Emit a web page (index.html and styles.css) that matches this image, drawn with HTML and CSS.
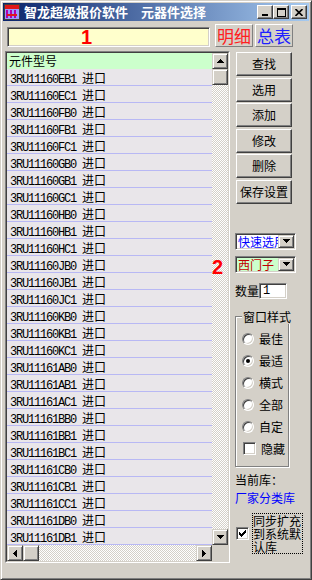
FILE: index.html
```html
<!DOCTYPE html>
<html lang="zh-CN">
<head>
    <meta charset="UTF-8">
    <title>元器件选择</title>
    <link rel="stylesheet" href="styles.css">
</head>
<body>
    <div class="window">
        <div class="titlebar">
            <svg class="app-icon" width="16" height="16" viewBox="0 0 16 16">
                <rect width="16" height="16" fill="#fff"/>
                <rect x="1" y="1" width="14" height="4" fill="#e01818"/>
                <rect x="1" y="5" width="14" height="10" fill="#9a9aff"/>
                <path d="M2 14V6h2v8zM6 14V6h2v8zM10 14V6h2v8z" fill="#b000b0"/>
                <path d="M3 10h10v2H3z" fill="#e01818"/>
                <rect x="0.5" y="0.5" width="15" height="15" fill="none" stroke="#404040"/>
            </svg>
            <span class="title">智龙超级报价软件　元器件选择</span>
            <div class="caption-btns">
                <span class="cap-btn"><svg width="8" height="8"><rect x="1" y="6" width="6" height="2"/></svg></span>
                <span class="cap-btn"><svg width="9" height="9"><path d="M0 0h9v9H0zM1 2v6h7V2z" fill-rule="evenodd"/></svg></span>
                <span class="cap-btn close"><svg width="8" height="7"><path d="M0.5 0l7 7M7.5 0l-7 7" stroke="#000" stroke-width="1.6"/></svg></span>
            </div>
        </div>

        <div class="client">
            <div class="top-row">
                <div class="search-box"><span class="mark">1</span></div>
                <span class="big-btn detail">明细</span>
                <span class="big-btn total">总表</span>
            </div>

            <div class="main">
                <div class="list">
                    <div class="list-frame">
                        <div class="list-top">
                            <div class="rows" id="partRows">
                                <div class="list-head">元件型号</div>
                                <!-- rows are added by the script below -->
                            </div>
                            <div class="vscroll">
                                <span class="sb-btn"><svg width="7" height="4"><path d="M3 0h1v1h1v1h1v1h1v1H0V3h1V2h1V1h1z"/></svg></span>
                                <span class="sb-btn"></span>
                                <span class="sb-track"></span>
                                <span class="sb-btn"><svg width="7" height="4"><path d="M0 0h7v1H6v1H5v1H4v1H3V3H2V2H1V1H0z"/></svg></span>
                            </div>
                        </div>
                        <div class="hscroll">
                            <span class="sb-btn"><svg width="4" height="7"><path d="M3 0h1v7H3V6H2V5H1V4H0V3h1V2h1V1h1z"/></svg></span>
                            <span class="sb-btn"></span>
                            <span class="sb-track"></span>
                            <span class="sb-btn"><svg width="4" height="7"><path d="M0 0h1v1h1v1h1v1h1v1H3v1H2v1H1v1H0z"/></svg></span>
                            <span class="sb-corner"></span>
                        </div>
                    </div>
                </div>

                <div class="side">
                    <div class="btn-stack">
                        <span class="btn">查找</span>
                        <span class="btn">选用</span>
                        <span class="btn">添加</span>
                        <span class="btn">修改</span>
                        <span class="btn">删除</span>
                        <span class="btn">保存设置</span>
                    </div>

                    <div class="combo quick">
                        <span class="combo-text">快速选用</span>
                        <span class="combo-drop"><svg width="7" height="4"><path d="M0 0h7v1H6v1H5v1H4v1H3V3H2V2H1V1H0z"/></svg></span>
                    </div>
                    <div class="combo maker">
                        <span class="combo-text">西门子</span>
                        <span class="combo-drop"><svg width="7" height="4"><path d="M0 0h7v1H6v1H5v1H4v1H3V3H2V2H1V1H0z"/></svg></span>
                    </div>
                    <span class="mark mark-2">2</span>

                    <div class="qty-row">
                        <span>数量</span>
                        <span class="qty-input">1</span>
                    </div>

                    <fieldset class="style-group">
                        <legend>窗口样式</legend>
                        <div class="option"><span class="radio"></span>最佳</div>
                        <div class="option"><span class="radio on"></span>最适</div>
                        <div class="option"><span class="radio"></span>横式</div>
                        <div class="option"><span class="radio"></span>全部</div>
                        <div class="option"><span class="radio"></span>自定</div>
                        <div class="option"><span class="check"></span>隐藏</div>
                    </fieldset>

                    <div class="lib-label">当前库：</div>
                    <div class="lib-name">厂家分类库</div>

                    <div class="sync-row">
                        <span class="check">
                            <svg width="7" height="7"><path d="M6 0h1v3H6v1H5v1H4v1H3v1H2V6H1V5H0V2h1v1h1v1h1V3h1V2h1V1h1z"/></svg>
                        </span>
                        <span class="sync-label">同步扩充到系统默认库</span>
                    </div>
                </div>
            </div>
        </div>
    </div>

    <script>
        const partCodes = [
            '3RU11160EB1', '3RU11160EC1', '3RU11160FB0', '3RU11160FB1',
            '3RU11160FC1', '3RU11160GB0', '3RU11160GB1', '3RU11160GC1',
            '3RU11160HB0', '3RU11160HB1', '3RU11160HC1', '3RU11160JB0',
            '3RU11160JB1', '3RU11160JC1', '3RU11160KB0', '3RU11160KB1',
            '3RU11160KC1', '3RU11161AB0', '3RU11161AB1', '3RU11161AC1',
            '3RU11161BB0', '3RU11161BB1', '3RU11161BC1', '3RU11161CB0',
            '3RU11161CB1', '3RU11161CC1', '3RU11161DB0', '3RU11161DB1'
        ];
        const partRows = document.getElementById('partRows');

        partCodes.forEach(code => {
            const row = document.createElement('div');
            row.className = 'row';
            row.innerHTML = `<span class="code">${code}</span><span class="origin">进口</span>`;
            partRows.appendChild(row);
        });
    </script>
</body>
</html>
```

FILE: styles.css
```css
* {
    box-sizing: border-box;
}
body {
    margin: 0;
    font-family: "Noto Sans CJK SC", sans-serif;
    font-size: 12px;
    color: #000;
}
.window {
    width: 312px;
    height: 580px;
    padding: 2px;
    background: #d4d0c8;
    border: 1px solid;
    border-color: #d4d0c8 #404040 #404040 #d4d0c8;
    box-shadow: inset 1px 1px #fff, inset -1px -1px #808080;
    display: flex;
    flex-direction: column;
}

/* title bar */
.titlebar {
    height: 18px;
    flex: none;
    display: flex;
    align-items: center;
    padding: 0 2px 0 1px;
    background: linear-gradient(to right, #0a246a, #a6caf0);
    color: #fff;
}
.app-icon {
    flex: none;
}
.title {
    flex: 1;
    margin-left: 4px;
    font-size: 13px;
    font-weight: bold;
    line-height: 18px;
    white-space: nowrap;
}
.caption-btns {
    display: flex;
}
.cap-btn {
    width: 16px;
    height: 14px;
    display: flex;
    align-items: center;
    justify-content: center;
    background: #d4d0c8;
    border: 1px solid;
    border-color: #fff #404040 #404040 #fff;
    box-shadow: inset -1px -1px #808080;
}
.cap-btn.close {
    margin-left: 2px;
}

/* client area */
.client {
    flex: 1;
    display: flex;
    flex-direction: column;
    padding: 3px 0 0 2px;
}
.top-row {
    display: flex;
    align-items: flex-end;
    height: 23px;
    margin-left: 2px;
}
.search-box {
    width: 203px;
    height: 20px;
    padding-left: 73px;
    background: #ffffcc;
    border: 1px solid;
    border-color: #808080 #fff #fff #808080;
    box-shadow: inset 1px 1px #404040, inset -1px -1px #d4d0c8;
}
.mark {
    color: #ff0000;
    font-family: "Liberation Sans", sans-serif;
    font-weight: bold;
    font-size: 20px;
    line-height: 18px;
}
.big-btn {
    width: 38px;
    height: 23px;
    margin-left: 5px;
    font-size: 17px;
    line-height: 21px;
    text-align: center;
    border: 1px solid;
    border-color: #fff #808080 #808080 #fff;
}
.big-btn.detail {
    color: #ff2020;
}
.big-btn.total {
    margin-left: 2px;
    color: #2020ff;
}
.main {
    display: flex;
    margin-top: 4px;
}

/* list */
.list {
    width: 225px;
    height: 512px;
    flex: none;
    display: flex;
    border: 1px solid;
    border-color: #808080 #fff #fff #808080;
}
.list-frame {
    flex: 1;
    display: flex;
    flex-direction: column;
    border: 1px solid;
    border-color: #404040 #d4d0c8 #d4d0c8 #404040;
}
.list-top {
    flex: 1;
    display: flex;
    min-height: 0;
}
.rows {
    flex: 1;
    overflow: hidden;
    background: #e9e6ea;
}
.list-head {
    height: 16px;
    padding-left: 2px;
    line-height: 16px;
    background: #ccffcc;
}
.row {
    height: 17px;
    padding: 1px 0 0 3px;
    line-height: 15px;
    white-space: nowrap;
    border-bottom: 1px solid #b8b8f4;
}
.code {
    font-family: "Liberation Mono", monospace;
    font-size: 12px;
    letter-spacing: -1.2px;
}
.origin {
    margin-left: 6px;
}
.vscroll {
    width: 16px;
    display: flex;
    flex-direction: column;
}
.hscroll {
    height: 16px;
    flex: none;
    display: flex;
}
.sb-btn {
    width: 16px;
    height: 16px;
    flex: none;
    display: flex;
    align-items: center;
    justify-content: center;
    background: #d4d0c8;
    border: 1px solid;
    border-color: #d4d0c8 #404040 #404040 #d4d0c8;
    box-shadow: inset 1px 1px #fff, inset -1px -1px #808080;
}
.sb-track {
    flex: 1;
    background: repeating-conic-gradient(#fff 0 25%, #d4d0c8 0 50%) 0 0 / 2px 2px;
}
.sb-corner {
    width: 16px;
    background: #d4d0c8;
}

/* right side panel */
.side {
    position: relative;
    width: 72px;
    flex: none;
    margin-left: 5px;
    padding-top: 1px;
    display: flex;
    flex-direction: column;
    align-items: flex-start;
}
.btn-stack {
    display: flex;
    flex-direction: column;
    gap: 1.6px;
}
.btn {
    width: 56px;
    height: 24px;
    margin-left: 1px;
    line-height: 22px;
    text-align: center;
    background: #d4d0c8;
    border: 1px solid;
    border-color: #fff #404040 #404040 #fff;
    box-shadow: inset -1px -1px #808080;
}
.combo {
    width: 61px;
    height: 17px;
    display: flex;
    padding: 1px;
    border: 1px solid;
    border-color: #808080 #fff #fff #808080;
    box-shadow: inset 1px 1px #404040, inset -1px -1px #d4d0c8;
}
.combo.quick {
    margin-top: 29px;
    background: #fff;
    color: #0000ff;
}
.combo.maker {
    margin-top: 6px;
    background: #ccffcc;
    color: #c00000;
}
.combo-text {
    flex: 1;
    min-width: 0;
    overflow-x: clip;
    white-space: nowrap;
    padding-left: 1px;
    line-height: 13px;
}
.combo-drop {
    width: 16px;
    flex: none;
    display: flex;
    align-items: center;
    justify-content: center;
    background: #d4d0c8;
    border: 1px solid;
    border-color: #d4d0c8 #404040 #404040 #d4d0c8;
    box-shadow: inset 1px 1px #fff, inset -1px -1px #808080;
}
.mark-2 {
    position: absolute;
    left: -23px;
    top: 207px;
}
.qty-row {
    display: flex;
    align-items: center;
    margin-top: 10px;
    height: 16px;
}
.qty-input {
    width: 28px;
    height: 16px;
    padding-left: 3px;
    background: #fff;
    font-family: "Liberation Mono", monospace;
    line-height: 14px;
    border: 1px solid;
    border-color: #808080 #fff #fff #808080;
    box-shadow: inset 1px 1px #404040, inset -1px -1px #d4d0c8;
}
.style-group {
    width: 54px;
    min-width: 0;
    margin: 11px 0 0;
    padding: 4px 0 6px 6px;
    border: 1px solid #808080;
    box-shadow: inset 1px 1px #fff, 1px 1px #fff;
}
.style-group legend {
    padding: 0 1px;
    line-height: 14px;
    white-space: nowrap;
    background: #d4d0c8;
}
.option {
    display: flex;
    align-items: center;
    height: 22px;
    white-space: nowrap;
}
.radio {
    position: relative;
    width: 12px;
    height: 12px;
    flex: none;
    margin-right: 5px;
    border-radius: 50%;
    background: #fff;
    border: 1px solid;
    border-color: #808080 #fff #fff #808080;
    box-shadow: inset 1px 1px #404040, inset -1px -1px #d4d0c8;
}
.radio.on::after {
    content: '';
    position: absolute;
    left: 3px;
    top: 3px;
    width: 4px;
    height: 4px;
    border-radius: 50%;
    background: #000;
}
.check {
    width: 13px;
    height: 13px;
    flex: none;
    display: flex;
    align-items: center;
    justify-content: center;
    background: #fff;
    border: 1px solid;
    border-color: #808080 #fff #fff #808080;
    box-shadow: inset 1px 1px #404040, inset -1px -1px #d4d0c8;
}
.option .check {
    margin: 0 5px 0 1px;
}
.lib-label {
    margin-top: 6px;
    line-height: 14px;
}
.lib-name {
    margin-top: 4px;
    line-height: 14px;
    color: #0000ff;
}
.sync-row {
    display: flex;
    align-items: center;
    margin-top: 8px;
}
.sync-row .check {
    margin-left: 1px;
}
.sync-label {
    width: 51px;
    flex: none;
    margin-left: 3px;
    line-height: 13px;
    border: 1px dotted #000;
}
```
